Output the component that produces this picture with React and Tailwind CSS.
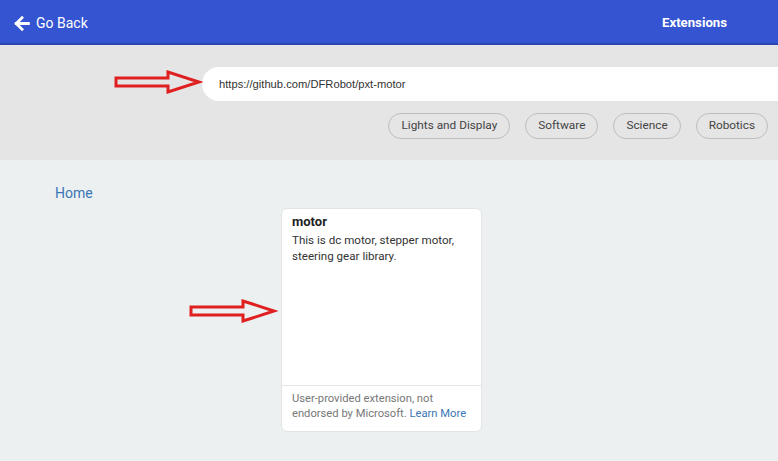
import React from 'react'

function RedArrow({ className }) {
  return (
    <svg className={className} viewBox="0 0 88 24" fill="none">
      <path d="M2 8 H54 V2 L85 12 L54 22 V16 H2 Z" stroke="#e02020" strokeWidth="3" strokeLinejoin="miter" />
    </svg>
  )
}

export default function App() {
  const tags = ['Lights and Display', 'Software', 'Science', 'Robotics']
  return (
    <div className="relative w-[778px] h-[461px] overflow-hidden bg-[#ecf0f1] font-['Roboto',sans-serif]">
      <header className="h-[45px] bg-[#3454d1] border-b-2 border-[#2a44b0] flex items-center justify-between pl-[13px] pr-[51px] pt-[3px] text-white">
        <div className="flex items-center gap-[6px]">
          <svg width="17" height="17" viewBox="0 0 16 16" fill="none">
            <path d="M14.5 8H3M8.5 2.5L3 8l5.5 5.5" stroke="white" strokeWidth="2.6" strokeLinecap="square" />
          </svg>
          <span className="text-[14px]">Go Back</span>
        </div>
        <span className="text-[13.2px] font-bold">Extensions</span>
      </header>

      <section className="h-[115px] bg-[#e5e5e5] pt-[22px] flex flex-col items-end">
        <div className="w-[576px] h-[34px] bg-white rounded-l-full flex items-center pl-[17px] text-[11.2px] text-[#333] font-['Liberation_Sans',sans-serif]">
          https://github.com/DFRobot/pxt-motor
        </div>
        <div className="mt-[12px] mr-[10px] flex gap-[15px]">
          {tags.map(t => (
            <span key={t} className="h-[26px] px-[12px] flex items-center rounded-full border border-[#bdbdbd] text-[11.8px] text-[#444]">
              {t}
            </span>
          ))}
        </div>
      </section>

      <main className="px-[55px] pt-[23px]">
        <div className="text-[14px] leading-[20px] text-[#3a76b5]">Home</div>
        <div className="ml-[226px] mt-[5px] w-[201px] h-[224px] bg-white rounded-[6px] border border-[#e2e4e6] flex flex-col">
          <div className="flex-1 px-[10px] pt-[4px]">
            <div className="text-[13px] leading-[18px] font-bold text-[#222]">motor</div>
            <p className="text-[11.6px] leading-[16px] text-[#333] mt-[1px]">
              This is dc motor, stepper motor, steering gear library.
            </p>
          </div>
          <div className="h-[46px] border-t border-[#e5e5e5] px-[10px] pt-[5px] text-[11.2px] leading-[15px] text-[#777]">
            User-provided extension, not endorsed by Microsoft.{' '}
            <span className="text-[#3a76b5] whitespace-nowrap">Learn More</span>
          </div>
        </div>
      </main>

      <RedArrow className="absolute left-[113px] top-[70px] w-[90px] h-[24px]" />
      <RedArrow className="absolute left-[188px] top-[299px] w-[90px] h-[24px]" />
    </div>
  )
}
